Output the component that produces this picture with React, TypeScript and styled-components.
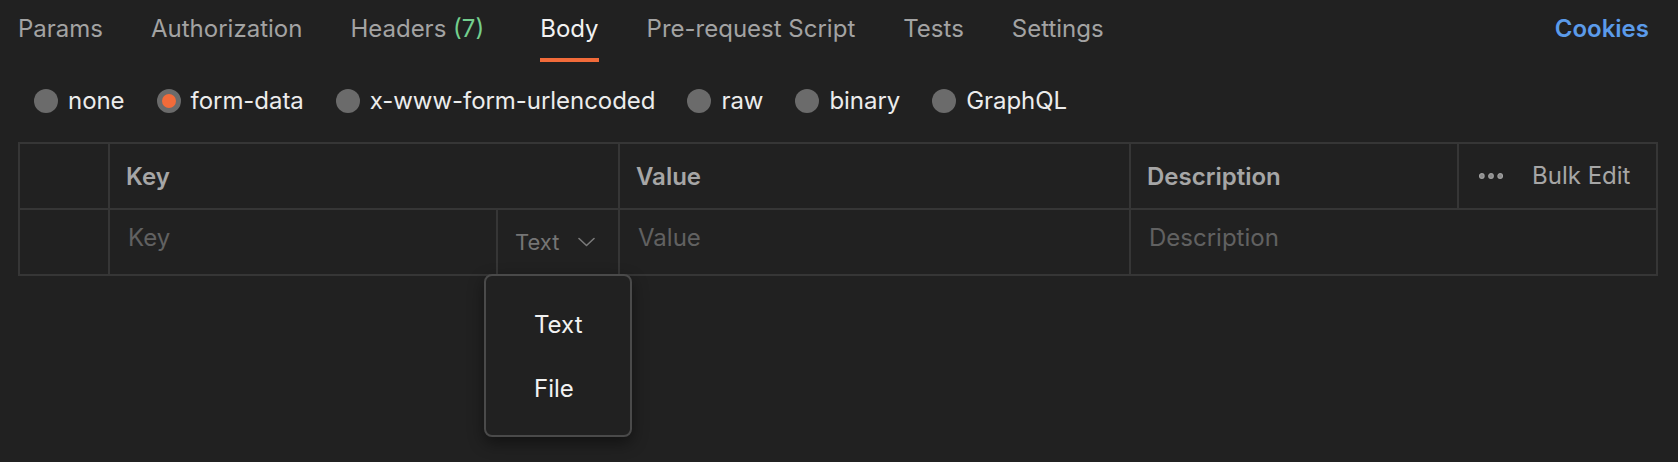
import React from "react";
import styled, { createGlobalStyle } from "styled-components";

const GlobalStyle = createGlobalStyle`
  html, body {
    margin: 0;
    padding: 0;
    background: #212121;
  }
  body {
    font-family: Inter, "Noto Sans", "Liberation Sans", sans-serif;
    -webkit-font-smoothing: antialiased;
  }
  #root {
    min-height: 462px;
  }
`;

const Page = styled.div`
  width: 1678px;
  min-height: 462px;
  background: #212121;
  box-sizing: border-box;
`;

const TabBar = styled.div`
  display: flex;
  justify-content: space-between;
  align-items: flex-start;
  padding: 0 29px 0 18px;
`;

const TabList = styled.div`
  display: flex;
  gap: 48px;
`;

const Tab = styled.div<{ $active?: boolean }>`
  font-size: 24px;
  line-height: 30px;
  padding: 14px 0 14px;
  border-bottom: 4px solid ${(p) => (p.$active ? "#f26b3a" : "transparent")};
  color: ${(p) => (p.$active ? "#f2f2f2" : "#a3a3a3")};
  white-space: nowrap;
`;

const Count = styled.span`
  color: #74cf8e;
  margin-right: 8px;
`;

const CookiesLink = styled.div`
  font-size: 24px;
  line-height: 30px;
  padding-top: 14px;
  font-weight: 600;
  color: #5b9bea;
`;

const RadioGroup = styled.div`
  display: flex;
  align-items: center;
  gap: 32px;
  padding: 24px 0 0 34px;
`;

const RadioOption = styled.div`
  display: flex;
  align-items: center;
  gap: 10px;
  font-size: 24px;
  line-height: 30px;
  letter-spacing: -0.05px;
  color: #ececec;
`;

const RadioDot = styled.span<{ $selected?: boolean }>`
  display: block;
  width: 24px;
  height: 24px;
  border-radius: 50%;
  box-sizing: border-box;
  background: ${(p) => (p.$selected ? "#f26b3a" : "#6b6b6b")};
  border: ${(p) => (p.$selected ? "5px solid #6b6b6b" : "none")};
`;

const Table = styled.div`
  margin: 26px 20px 0 18px;
  display: grid;
  grid-template-columns: 90px 388px 122px 511px 328px 1fr;
  grid-auto-rows: 66px;
  border-top: 2px solid #363636;
  border-left: 2px solid #363636;
`;

const Cell = styled.div<{ $span?: number }>`
  position: relative;
  box-sizing: border-box;
  border-right: 2px solid #363636;
  border-bottom: 2px solid #363636;
  grid-column: span ${(p) => p.$span ?? 1};
  display: flex;
  font-size: 24px;
  line-height: 30px;
`;

const HeaderCell = styled(Cell)`
  align-items: center;
  padding: 1px 0 0 16px;
  font-weight: 600;
  color: #a6a6a6;
`;

const BulkCell = styled(Cell)`
  align-items: center;
  padding-left: 20px;
  gap: 29px;
  color: #a6a6a6;
`;

const BulkLabel = styled.span`
  font-weight: 400;
`;

const InputCell = styled(Cell)`
  align-items: flex-start;
  padding: 13px 0 0 18px;
  color: #616161;
`;

const TypeCell = styled(Cell)`
  align-items: center;
  padding-left: 17px;
  gap: 19px;
  font-size: 22px;
  color: #757575;
`;

const Menu = styled.div`
  position: absolute;
  left: -14px;
  top: 64px;
  width: 148px;
  box-sizing: border-box;
  background: #212121;
  border: 2px solid #4a4a4a;
  border-radius: 8px;
  padding: 17px 0 14px;
  box-shadow: 0 6px 16px rgba(0, 0, 0, 0.45);
  z-index: 10;
`;

const MenuItem = styled.div`
  height: 64px;
  display: flex;
  align-items: center;
  padding-left: 48px;
  font-size: 24px;
  line-height: 30px;
  color: #f2f2f2;
`;

const Chevron = () => (
  <svg width="17" height="10" viewBox="0 0 17 10" fill="none">
    <polyline
      points="1,1.5 8.5,8.5 16,1.5"
      stroke="#7a7a7a"
      strokeWidth="1.6"
      strokeLinecap="round"
      strokeLinejoin="round"
    />
  </svg>
);

const Dots = () => (
  <svg width="24" height="6" viewBox="0 0 24 6" fill="none">
    {[2.8, 12, 21.2].map((cx) => (
      <circle key={cx} cx={cx} cy="3" r="2.3" stroke="#a0a0a0" strokeWidth="1.2" fill="#8a8a8a" />
    ))}
  </svg>
);

const tabs = [
  "Params",
  "Authorization",
  "Headers",
  "Body",
  "Pre-request Script",
  "Tests",
  "Settings",
];

const bodyTypes = ["none", "form-data", "x-www-form-urlencoded", "raw", "binary", "GraphQL"];

export default function App() {
  return (
    <Page>
      <GlobalStyle />
      <TabBar>
        <TabList>
          {tabs.map((t) => (
            <Tab key={t} $active={t === "Body"}>
              {t}
              {t === "Headers" && (
                <>
                  {" "}
                  <Count>(7)</Count>
                </>
              )}
            </Tab>
          ))}
        </TabList>
        <CookiesLink>Cookies</CookiesLink>
      </TabBar>

      <RadioGroup>
        {bodyTypes.map((b) => (
          <RadioOption key={b}>
            <RadioDot $selected={b === "form-data"} />
            {b}
          </RadioOption>
        ))}
      </RadioGroup>

      <Table>
        <HeaderCell />
        <HeaderCell $span={2}>Key</HeaderCell>
        <HeaderCell>Value</HeaderCell>
        <HeaderCell>Description</HeaderCell>
        <BulkCell>
          <Dots />
          <BulkLabel>Bulk Edit</BulkLabel>
        </BulkCell>

        <InputCell />
        <InputCell>Key</InputCell>
        <TypeCell>
          Text
          <Chevron />
          <Menu>
            <MenuItem>Text</MenuItem>
            <MenuItem>File</MenuItem>
          </Menu>
        </TypeCell>
        <InputCell>Value</InputCell>
        <InputCell $span={2}>Description</InputCell>
      </Table>
    </Page>
  );
}
